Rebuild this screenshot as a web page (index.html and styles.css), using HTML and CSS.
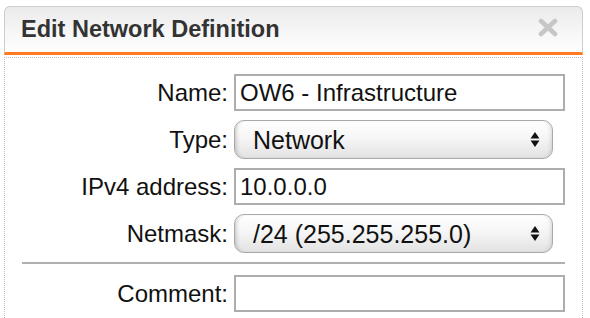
FILE: index.html
```html
<!DOCTYPE html>
<html lang="en">

<head>
    <meta charset="UTF-8">
    <title>Edit Network Definition</title>
    <link rel="stylesheet" href="styles.css">
</head>

<body>
    <div class="dialog">
        <!-- title bar with the orange underline -->
        <div class="dialog-header">
            <span class="dialog-title">Edit Network Definition</span>
            <span class="dialog-close">
                <svg viewBox="0 0 22 19" width="22" height="19">
                    <path d="M4 3 L18 16 M18 3 L4 16" stroke="#c6c6c6" stroke-width="4.5" stroke-linecap="round" fill="none" />
                </svg>
            </span>
        </div>

        <!-- the form itself, labels on the left, fields on the right -->
        <div class="dialog-body">
            <form class="net-form">
                <label class="field-label" for="name">Name:</label>
                <input class="text-field" id="name" type="text" value="OW6 - Infrastructure">

                <label class="field-label" for="type">Type:</label>
                <div class="select-wrap">
                    <select class="select-field" id="type">
                        <option>Network</option>
                    </select>
                    <svg class="select-arrows" viewBox="0 0 10 15" width="10" height="15">
                        <polygon points="5,0 9.5,6.5 0.5,6.5" fill="#111" />
                        <polygon points="0.5,8.5 9.5,8.5 5,15" fill="#111" />
                    </svg>
                </div>

                <label class="field-label" for="ipv4">IPv4 address:</label>
                <input class="text-field" id="ipv4" type="text" value="10.0.0.0">

                <label class="field-label" for="netmask">Netmask:</label>
                <div class="select-wrap">
                    <select class="select-field" id="netmask">
                        <option>/24 (255.255.255.0)</option>
                    </select>
                    <svg class="select-arrows" viewBox="0 0 10 15" width="10" height="15">
                        <polygon points="5,0 9.5,6.5 0.5,6.5" fill="#111" />
                        <polygon points="0.5,8.5 9.5,8.5 5,15" fill="#111" />
                    </svg>
                </div>

                <hr class="form-sep">

                <label class="field-label" for="comment">Comment:</label>
                <input class="text-field" id="comment" type="text" value="">
            </form>
        </div>
    </div>
</body>

</html>
```

FILE: styles.css
```css
body, html {
    margin: 0;
    font-family: "Liberation Sans", Arial, sans-serif;
    background: #fff;
}

/* outer dialog box */
.dialog {
    margin: 6px 0 0 4px;
    width: 579px;
}

/* grey gradient title bar */
.dialog-header {
    height: 49px;
    box-sizing: border-box;
    display: flex;
    align-items: center;
    justify-content: space-between;
    padding: 0 23px 0 16px;
    border: 1px solid #cdcdcd;
    border-bottom: 3px solid #ff7a22;
    border-radius: 6px 6px 0 0;
    background: linear-gradient(#ebebeb, #f7f7f7 60%, #fff);
}

.dialog-title {
    font-size: 23.5px;
    font-weight: bold;
    color: #333;
}

.dialog-close {
    display: flex;
    margin-bottom: 4px;
}

/* dotted frame round the form */
.dialog-body {
    margin-top: 2px;
    border: 1px dotted #bdbdbd;
    border-bottom: none;
    padding: 16px 17px 6px 0;
}

.net-form {
    display: grid;
    grid-template-columns: 1fr 331px;
    column-gap: 6px;
    row-gap: 9px;
    align-items: center;
}

.field-label {
    text-align: right;
    font-size: 24px;
    color: #111;
}

.text-field {
    height: 37px;
    box-sizing: border-box;
    border: 2px solid #adadad;
    padding: 0 4px;
    margin: 0;
    font-family: inherit;
    font-size: 24px;
    color: #111;
    outline: none;
}

/* mac style pop-up buttons */
.select-wrap {
    position: relative;
    width: 319px;
}

.select-field {
    appearance: none;
    -webkit-appearance: none;
    width: 100%;
    height: 39px;
    margin: 0;
    padding: 0 0 0 18px;
    border: 1px solid #a9a9a9;
    border-radius: 10px;
    background: linear-gradient(#ffffff, #f6f6f6 45%, #e2e2e2);
    box-shadow: inset 4px 0 4px -3px rgba(0,0,0,.22), inset -4px 0 4px -3px rgba(0,0,0,.15);
    font-family: inherit;
    font-size: 25px;
    color: #111;
}

.select-arrows {
    position: absolute;
    right: 13px;
    top: 12px;
    pointer-events: none;
}

.form-sep {
    grid-column: 1 / 3;
    margin: 0 0 2px 17px;
    border: none;
    border-top: 2px solid #b0b0b0;
    height: 0;
}
```
